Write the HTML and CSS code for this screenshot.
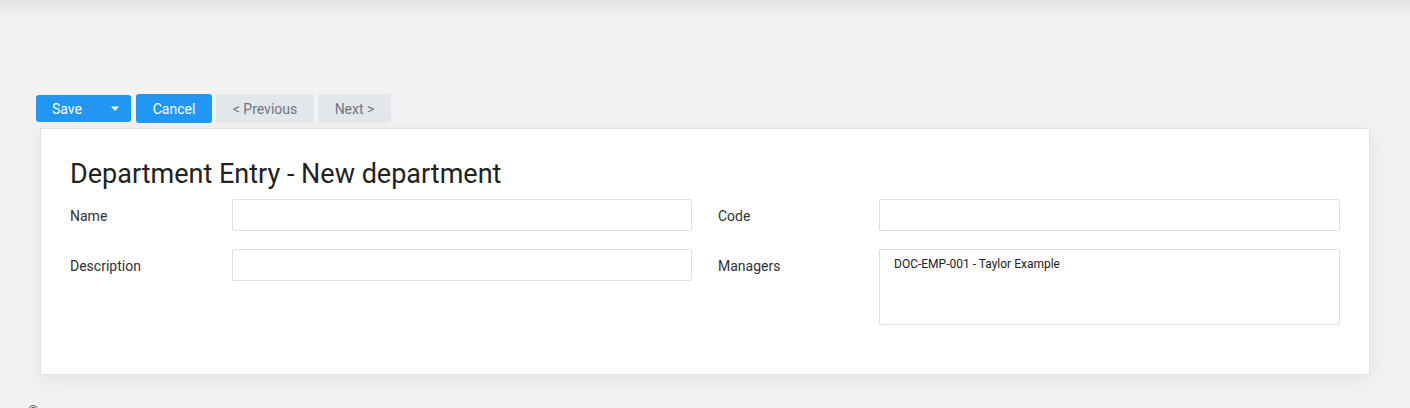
FILE: index.html
```html
<!DOCTYPE html>
<html lang="en">
<head>
  <meta charset="UTF-8">
  <title>Department Entry</title>
  <link rel="stylesheet" href="styles.css">
</head>
<body>

  <div class="page">
    <div class="toolbar">
      <div class="split-btn">
        <button class="btn btn-primary btn-main">Save</button>
        <button class="btn btn-primary btn-caret" title="More">
          <svg width="10" height="6" viewBox="0 0 10 6"><path d="M1 0.5h8L5 5z" fill="#fff"/></svg>
        </button>
      </div>
      <button class="btn btn-primary btn-cancel">Cancel</button>
      <button class="btn btn-light btn-prev">&lt; Previous</button>
      <button class="btn btn-light btn-next">Next &gt;</button>
    </div>

    <div class="card">
      <h1 class="card-title">Department Entry - New department</h1>

      <div class="form-grid">
        <div class="field">
          <label>Name</label>
          <input type="text" class="input">
        </div>
        <div class="field field-right">
          <label>Code</label>
          <input type="text" class="input">
        </div>
        <div class="field">
          <label>Description</label>
          <input type="text" class="input">
        </div>
        <div class="field field-right">
          <label>Managers</label>
          <div class="input list-box">
            <div class="list-item">DOC-EMP-001 - Taylor Example</div>
          </div>
        </div>
      </div>
    </div>

    <footer class="footer">©</footer>
  </div>

</body>
</html>
```

FILE: styles.css
```css
body {
  font-family: Roboto, 'Liberation Sans', sans-serif;
  margin: 0;
  padding: 0;
  background: linear-gradient(to bottom, #e3e3e3 0, #f2f2f2 16px) #f2f2f2;
  color: #333;
}

.page {
  padding: 94px 40px 0 36px;
}

.toolbar {
  display: flex;
  align-items: center;
  gap: 4px;
}

.btn {
  font-family: inherit;
  font-size: 14px;
  border: none;
  border-radius: 3px;
  height: 29px;
  padding: 0;
  text-align: center;
  cursor: pointer;
}

.btn-primary {
  background: #2196f3;
  color: #fff;
}

.btn-light {
  background: #e3e7eb;
  color: #6c757d;
}

.btn-cancel { width: 76px; }
.btn-prev { width: 98px; }
.btn-next { width: 73px; }

.split-btn {
  display: flex;
  margin-right: 1px;
}

.split-btn .btn {
  height: 27px;
}

.btn-main {
  border-radius: 3px 0 0 3px;
  padding: 0 16px;
  width: 62px;
  text-align: left;
}

.btn-caret {
  border-radius: 0 3px 3px 0;
  width: 33px;
  display: flex;
  align-items: center;
  justify-content: center;
}

.card {
  margin: 5px 0 0 4px;
  background: #fff;
  border: 1px solid #dbe2ea;
  box-shadow: 0 4px 18px rgba(0, 0, 0, 0.07);
  padding: 29px 29px 49px 29px;
}

.card-title {
  margin: 0 0 8px 0;
  font-size: 27px;
  font-weight: 400;
  color: #222;
  line-height: 33px;
}

.form-grid {
  display: grid;
  grid-template-columns: 622px 1fr;
  column-gap: 26px;
  row-gap: 18px;
}

.field {
  display: grid;
  grid-template-columns: 162px 1fr;
  align-items: start;
}

.field-right {
  grid-template-columns: 161px 1fr;
}

.field label {
  display: block;
  height: 32px;
  font-size: 14px;
  line-height: 34px;
  color: #333;
}

.input {
  box-sizing: border-box;
  height: 32px;
  width: 100%;
  border: 1px solid #dcdfe3;
  border-radius: 2px;
  background: #fff;
  font-family: inherit;
  font-size: 14px;
  padding: 0 12px;
  outline: none;
}

.list-box {
  height: 76px;
  padding: 5px 14px;
}

.list-item {
  font-size: 12px;
  line-height: 18px;
  color: #222;
}

.footer {
  margin-top: 27px;
  margin-left: -8px;
  font-size: 13px;
  line-height: 18px;
  color: #444;
}
```
